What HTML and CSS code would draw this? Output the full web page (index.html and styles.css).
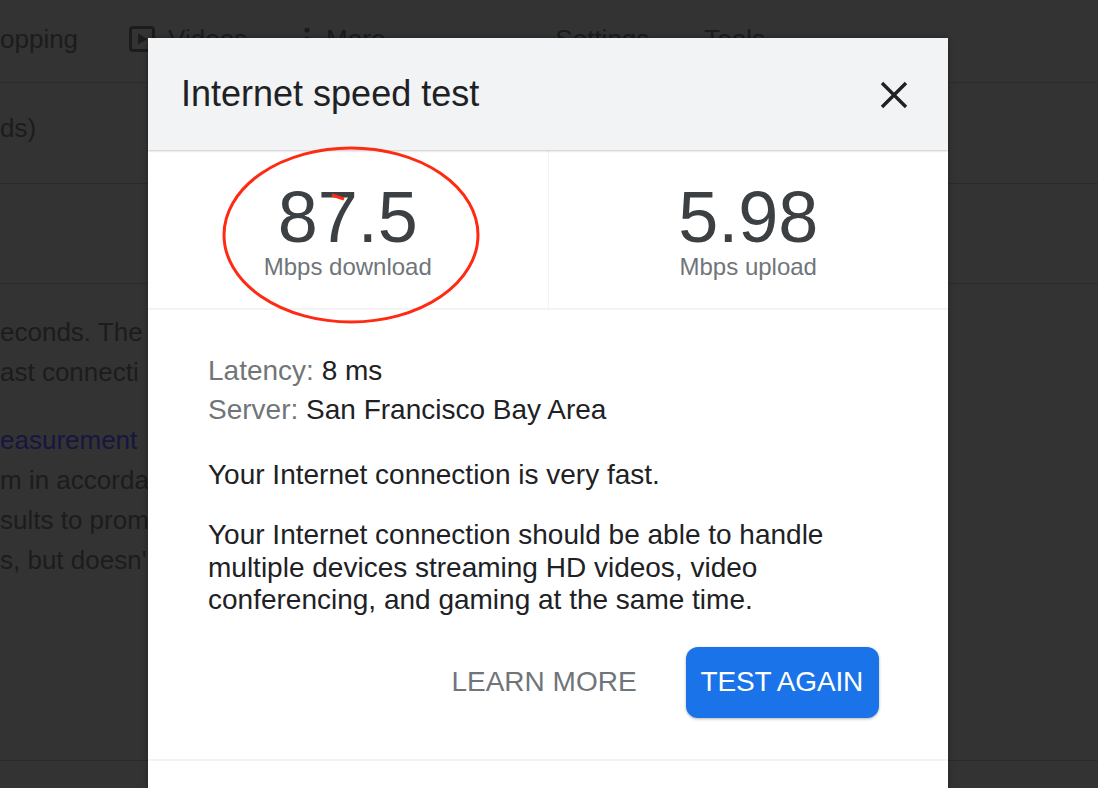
FILE: index.html
```html
<!DOCTYPE html>
<html lang="en">

<head>
    <meta charset="UTF-8">
    <meta name="viewport" content="width=device-width, initial-scale=1.0">
    <title>Internet speed test</title>
    <link rel="stylesheet" href="styles.css">
</head>

<body>
    <!-- dimmed search page behind the dialog -->
    <div class="page">
        <div class="tabs">
            <span class="tab">opping</span>
            <span class="tab tab-videos">
                <svg class="tab-icon" width="26" height="26" viewBox="0 0 26 26">
                    <rect x="1.5" y="1.5" width="23" height="23" rx="2.5" fill="none" stroke="#1c1c1c" stroke-width="3" />
                    <path d="M9 7.5 L18.5 13 L9 18.5 Z" fill="#1c1c1c" />
                </svg>
                Videos
            </span>
            <span class="tab tab-more">
                <svg class="tab-dots" width="6" height="26" viewBox="0 0 6 26">
                    <circle cx="3" cy="4" r="2.6" fill="#1c1c1c" />
                    <circle cx="3" cy="13" r="2.6" fill="#1c1c1c" />
                    <circle cx="3" cy="22" r="2.6" fill="#1c1c1c" />
                </svg>
                More
            </span>
            <span class="tab tab-settings">Settings</span>
            <span class="tab tab-tools">Tools</span>
        </div>
        <div class="result-row">ds)</div>
        <div class="result-row"></div>
        <div class="snippet">
            <p>econds. The</p>
            <p>ast connecti</p>
        </div>
        <div class="snippet">
            <p><a href="#">easurement</a></p>
            <p>m in accorda</p>
            <p>sults to prom</p>
            <p>s, but doesn'</p>
        </div>
        <div class="page-end"></div>
    </div>

    <div class="dialog">
        <div class="dialog-head">
            <h1>Internet speed test</h1>
            <svg class="close" width="28" height="28" viewBox="0 0 28 28">
                <path d="M2 2 L26 26 M26 2 L2 26" stroke="#202124" stroke-width="3.4" />
            </svg>
        </div>

        <div class="stats">
            <div class="stat">
                <div class="stat-num">87.5</div>
                <div class="stat-label">Mbps download</div>
            </div>
            <div class="stat">
                <div class="stat-num">5.98</div>
                <div class="stat-label">Mbps upload</div>
            </div>
        </div>

        <div class="details">
            <div class="meta"><span class="meta-key">Latency:</span> 8 ms</div>
            <div class="meta"><span class="meta-key">Server:</span> San Francisco Bay Area</div>
            <p class="verdict">Your Internet connection is very fast.</p>
            <p class="verdict verdict-long">Your Internet connection should be able to handle
                multiple devices streaming HD videos, video conferencing, and gaming at the same time.</p>
            <div class="actions">
                <button class="btn btn-text">LEARN MORE</button>
                <button class="btn btn-blue">TEST AGAIN</button>
            </div>
        </div>
        <div class="dialog-foot"></div>

        <!-- red marker drawn over the download figure -->
        <svg class="marker" width="800" height="300" viewBox="0 0 800 300">
            <ellipse cx="203" cy="197" rx="127" ry="87" fill="none" stroke="#ff2a12" stroke-width="3" />
            <path d="M184 157 L196 161" stroke="#ff2a12" stroke-width="3" />
        </svg>
    </div>
</body>

</html>
```

FILE: styles.css
```css
* {
    padding: 0;
    margin: 0;
    box-sizing: border-box;
}

body {
    width: 1098px;
    height: 788px;
    overflow: hidden;
    background-color: #333;
    font-family: "Liberation Sans", Arial, sans-serif;
    color: #1c1c1c;
    position: relative;
}

/* background page */

.page {
    font-size: 26px;
    white-space: nowrap;
}

.tabs {
    height: 83px;
    display: flex;
    align-items: center;
    border-bottom: 1px solid #2b2b2b;
    padding-bottom: 4px;
}

.tab {
    display: flex;
    align-items: center;
}

.tab-videos {
    margin-left: 51px;
}

.tab-icon {
    margin-right: 13px;
}

.tab-more {
    margin-left: 57px;
}

.tab-dots {
    margin-right: 16px;
}

.tab-settings {
    margin-left: 170px;
}

.tab-tools {
    margin-left: 55px;
}

.result-row {
    height: 101px;
    border-bottom: 1px solid #2b2b2b;
    display: flex;
    align-items: center;
    padding-bottom: 10px;
}

.result-row + .result-row {
    height: 100px;
}

.snippet {
    width: 148px;
    overflow: hidden;
    line-height: 40px;
    padding-top: 28px;
}

.snippet a {
    color: #16163e;
    text-decoration: none;
}

.page-end {
    height: 181px;
    border-bottom: 1px solid #2b2b2b;
}

/* dialog */

.dialog {
    position: absolute;
    left: 148px;
    top: 38px;
    width: 800px;
    bottom: -20px;
    background-color: #fff;
    box-shadow: 0 0 6px rgba(0, 0, 0, 0.3);
    display: flex;
    flex-direction: column;
}

.dialog-head {
    height: 112px;
    flex-shrink: 0;
    background-color: #f1f3f4;
    display: flex;
    align-items: center;
    justify-content: space-between;
    padding: 0 40px 0 33px;
    box-shadow: 0 1px 2px rgba(0, 0, 0, 0.22);
    position: relative;
}

.dialog-head h1 {
    font-size: 36px;
    font-weight: normal;
    color: #202124;
}

.close {
    margin-top: 2px;
}

.stats {
    height: 160px;
    flex-shrink: 0;
    display: flex;
    border-bottom: 2px solid #f1f3f4;
}

.stat {
    flex: 1;
    display: flex;
    flex-direction: column;
    align-items: center;
    justify-content: center;
    padding-top: 4px;
}

.stat + .stat {
    border-left: 1px solid #f1f3f4;
}

.stat-num {
    font-size: 72px;
    line-height: 72px;
    color: #3c4043;
}

.stat-label {
    font-size: 24px;
    line-height: 28px;
    color: #70757a;
}

.details {
    padding: 41px 69px 41px 60px;
    font-size: 28px;
    color: #202124;
}

.meta {
    line-height: 39px;
}

.meta-key {
    color: #70757a;
}

.verdict {
    line-height: 32px;
    margin-top: 30px;
    padding-right: 40px;
}

.verdict-long {
    line-height: 32.5px;
    margin-top: 28px;
}

.actions {
    display: flex;
    justify-content: flex-end;
    align-items: center;
    gap: 33px;
    margin-top: 30px;
}

.btn {
    font-family: "Liberation Sans", Arial, sans-serif;
    font-size: 28px;
    height: 71px;
    padding: 0 16px;
    border: none;
    border-radius: 12px;
    background: none;
    cursor: pointer;
}

.btn-text {
    color: #70757a;
}

.btn-blue {
    background-color: #1a73e8;
    color: #fff;
    padding: 0 16px 0 15px;
    letter-spacing: -0.2px;
    box-shadow: 0 1px 3px rgba(0, 0, 0, 0.3);
}

.dialog-foot {
    border-top: 2px solid #f1f3f4;
}

.marker {
    position: absolute;
    left: 0;
    top: 0;
    pointer-events: none;
}
```
